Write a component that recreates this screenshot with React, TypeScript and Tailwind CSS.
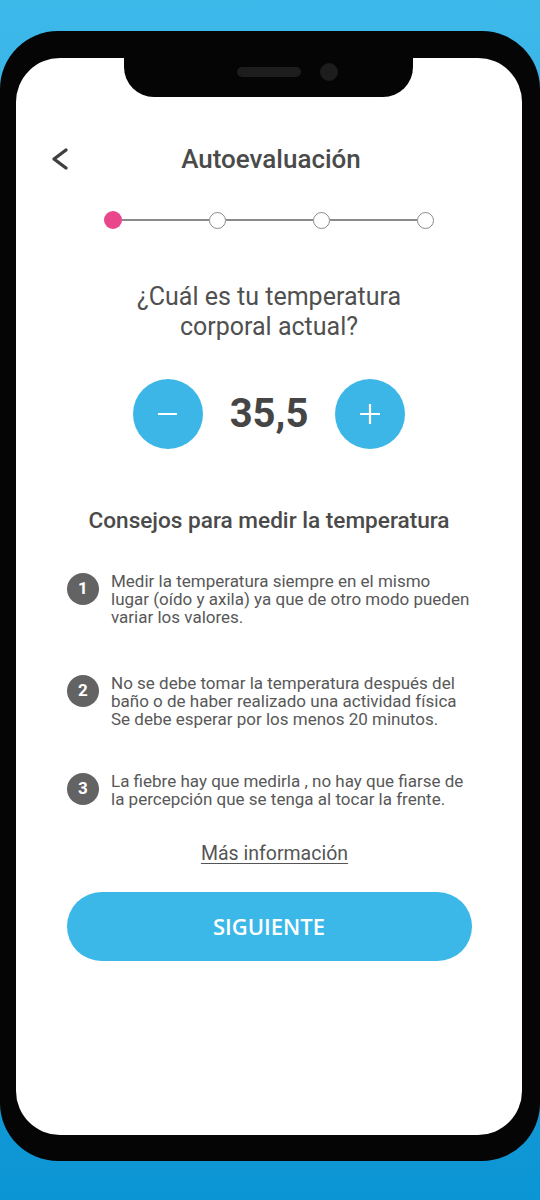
import React from "react";

const tips = [
  [
    "Medir la temperatura siempre en el mismo",
    "lugar (oído y axila) ya que de otro modo pueden",
    "variar los valores.",
  ],
  [
    "No se debe tomar la temperatura después del",
    "baño o de haber realizado una actividad física",
    "Se debe esperar por los menos 20 minutos.",
  ],
  [
    "La fiebre hay que medirla , no hay que fiarse de",
    "la percepción que se tenga al tocar la frente.",
  ],
];

export default function App() {
  return (
    <div
      className="w-[540px] h-[1200px] overflow-hidden bg-gradient-to-b from-[#3cb8e9] to-[#0b95d4] pt-[31px]"
      style={{ fontFamily: "Roboto, 'Liberation Sans', sans-serif" }}
    >
      <div className="w-[540px] h-[1130px] rounded-[58px] bg-[#050505] pt-[27px] pl-[16px] pr-[18px] pb-[26px]">
        <div className="relative w-[506px] h-[1077px] rounded-[44px] bg-white">
          {/* notch */}
          <div className="absolute left-[108px] top-0 w-[289px] h-[39px] bg-[#050505] rounded-b-[30px] flex items-center pl-[113px] gap-[19px]">
            <div className="w-[64px] h-[10px] rounded-full bg-[#1d1d1d] mt-[-12px]" />
            <div className="w-[18px] h-[18px] rounded-full bg-[#1d1d1d] mt-[-12px]" />
          </div>

          <div className="flex flex-col items-center pt-[86px]">
            {/* header */}
            <div className="relative w-full h-[30px] flex items-center justify-center">
              <svg
                className="absolute left-[34px] top-[3px]"
                width="20"
                height="24"
                viewBox="0 0 20 24"
                fill="none"
              >
                <path d="M16 3 L4 12 L16 21" stroke="#404040" strokeWidth="3.4" strokeLinecap="round" strokeLinejoin="round" />
              </svg>
              <span className="text-[26px] leading-[30px] font-medium text-[#4a4a4a] ml-[4px]">
                Autoevaluación
              </span>
            </div>

            {/* stepper */}
            <div className="mt-[37px] flex items-center h-[18px]">
              <div className="w-[18px] h-[18px] rounded-full bg-[#e9468b]" />
              <div className="w-[87px] h-[1.5px] bg-[#8a8a8a]" />
              <div className="w-[17px] h-[17px] rounded-full border-[1.5px] border-[#8a8a8a] bg-white" />
              <div className="w-[87px] h-[1.5px] bg-[#8a8a8a]" />
              <div className="w-[17px] h-[17px] rounded-full border-[1.5px] border-[#8a8a8a] bg-white" />
              <div className="w-[87px] h-[1.5px] bg-[#8a8a8a]" />
              <div className="w-[17px] h-[17px] rounded-full border-[1.5px] border-[#8a8a8a] bg-white" />
            </div>

            {/* question */}
            <div className="mt-[53px] text-center text-[25px] leading-[30px] text-[#505050]">
              <div>¿Cuál es tu temperatura</div>
              <div>corporal actual?</div>
            </div>

            {/* counter */}
            <div className="mt-[37px] flex items-center gap-[27px] h-[70px]">
              <div className="w-[70px] h-[70px] rounded-full bg-[#3bb6e6] flex items-center justify-center">
                <div className="w-[19px] h-[2.5px] bg-white" />
              </div>
              <span className="text-[40px] leading-[48px] font-bold text-[#454545]">35,5</span>
              <div className="w-[70px] h-[70px] rounded-full bg-[#3bb6e6] flex items-center justify-center">
                <svg width="22" height="22" viewBox="0 0 22 22">
                  <path d="M11 1 V21 M1 11 H21" stroke="white" strokeWidth="2.2" />
                </svg>
              </div>
            </div>

            {/* tips heading */}
            <div className="mt-[58px] text-[22.6px] leading-[28px] font-medium text-[#4a4a4a]">
              Consejos para medir la temperatura
            </div>

            {/* tips */}
            <div className="mt-[37px] w-full pl-[51px] flex flex-col">
              {tips.map((lines, i) => (
                <div
                  key={i}
                  className={`flex items-start gap-[12px] ${i === 1 ? "mt-[48px]" : i === 2 ? "mt-[44px]" : ""}`}
                >
                  <div className="w-[32px] h-[32px] mt-[1px] shrink-0 rounded-full bg-[#636363] flex items-center justify-center text-white text-[17px] font-bold">
                    {i + 1}
                  </div>
                  <div className="text-[17px] leading-[18px] text-[#585858] whitespace-nowrap">
                    {lines.map((l, j) => (
                      <div key={j}>{l}</div>
                    ))}
                  </div>
                </div>
              ))}
            </div>

            {/* more info */}
            <div className="mt-[34px] ml-[11px] text-[19.5px] leading-[24px] text-[#555555] underline underline-offset-[3px]">
              Más información
            </div>

            {/* button */}
            <div
              className="mt-[26px] w-[405px] h-[69px] rounded-full bg-[#3bb8e8] flex items-center justify-center text-white text-[22px] font-semibold"
              style={{ fontFamily: "'Open Sans', 'Liberation Sans', sans-serif" }}
            >
              SIGUIENTE
            </div>
          </div>
        </div>
      </div>
    </div>
  );
}
